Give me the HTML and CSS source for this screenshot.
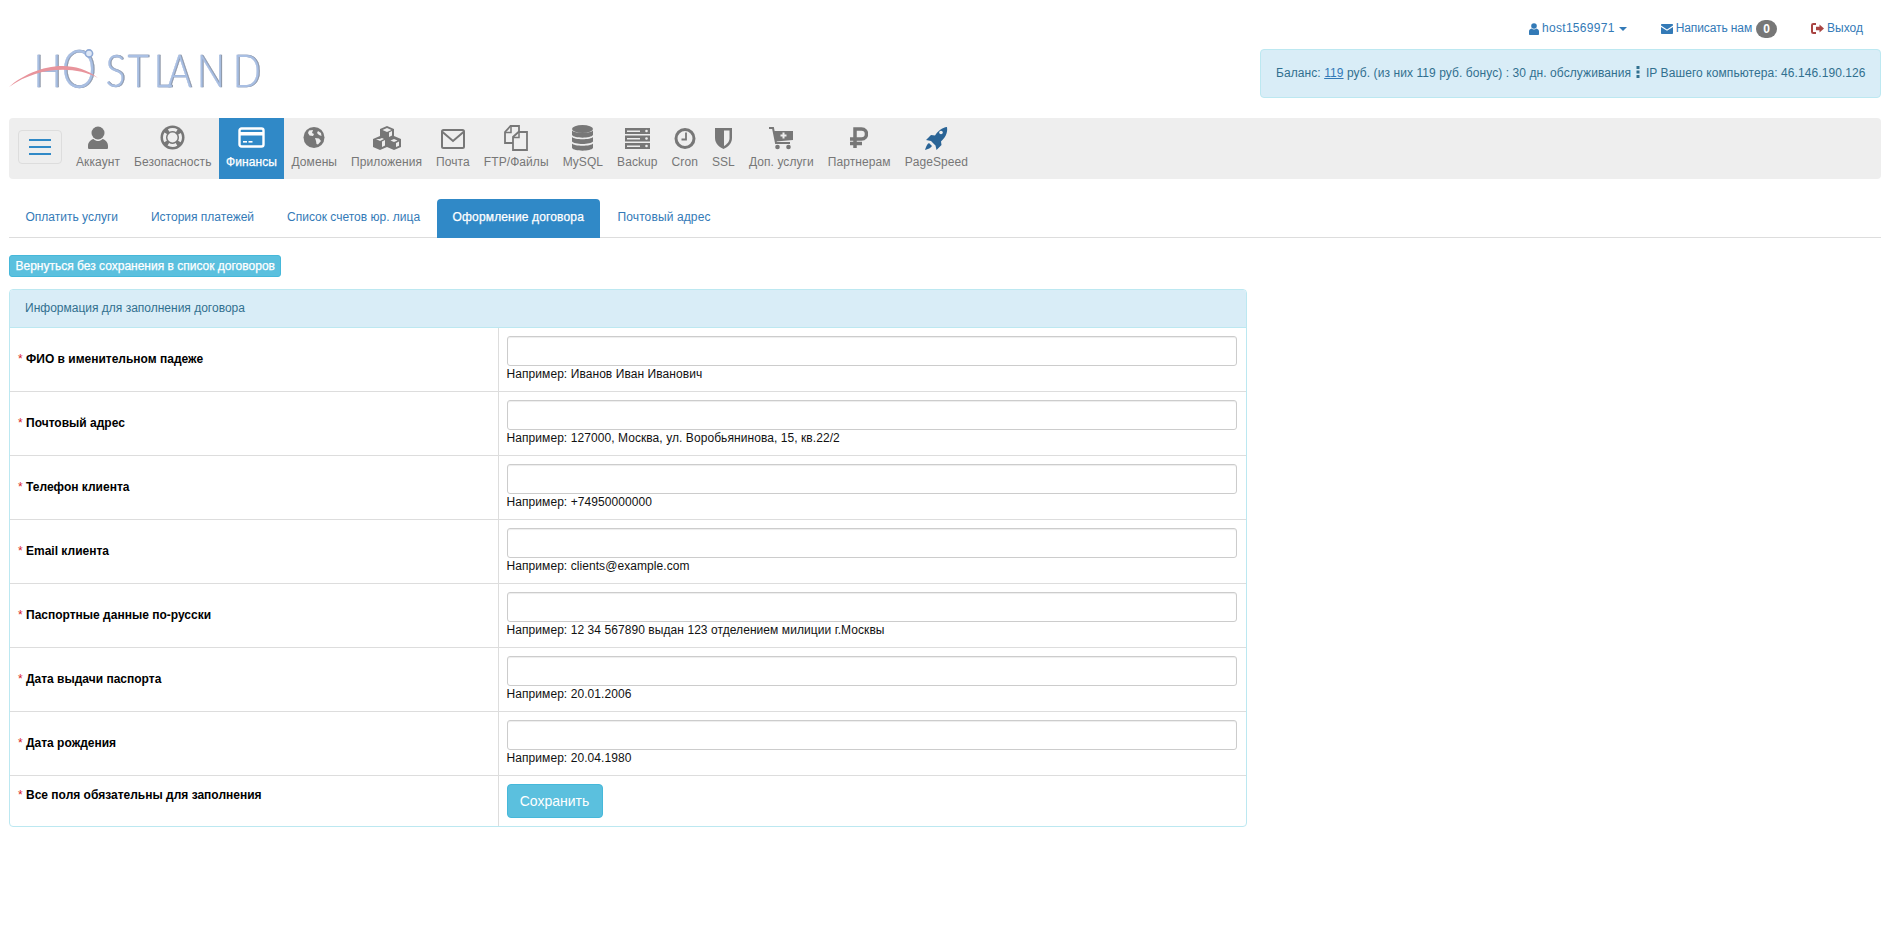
FILE: index.html
```html
<!DOCTYPE html>
<html lang="ru">
<head>
<meta charset="utf-8">
<title>Hostland</title>
<link rel="stylesheet" href="styles.css">
</head>
<body>
<div class="page">
  <div class="toplinks">
    <a class="toplink" href="#"><svg class="mini" width="10" height="12" viewBox="0 0 10 12"><circle cx="5" cy="3" r="2.8" fill="#337ab7"/><path d="M0 11V8.5C0 6.8 1.2 6 2.6 5.6 3.3 6.3 4.1 6.6 5 6.6S6.7 6.3 7.4 5.6C8.8 6 10 6.8 10 8.5V11C10 11.6 9.6 12 9 12H1C.4 12 0 11.6 0 11Z" fill="#337ab7"/></svg><span class="hostname">host1569971</span><span class="caret"></span></a>
    <a class="toplink" href="#"><svg class="mini" width="12" height="10" viewBox="0 0 12 10"><path d="M1 0H11C11.6 0 12 .4 12 1V1.6L6 5.4 0 1.6V1C0 .4.4 0 1 0ZM0 3 6 6.8 12 3V9C12 9.6 11.6 10 11 10H1C.4 10 0 9.6 0 9Z" fill="#337ab7"/></svg><span class="writeus">Написать нам</span><span class="badge">0</span></a>
    <a class="toplink" href="#"><svg class="mini" width="13" height="11" viewBox="0 0 13 11"><path d="M5 1H2.2C1.5 1 1 1.5 1 2.2V8.8C1 9.5 1.5 10 2.2 10H5" fill="none" stroke="#a94442" stroke-width="2"/><path d="M5 3.8H8.5V1.5L13 5.5 8.5 9.5V7.2H5Z" fill="#a94442"/></svg>Выход</a>
  </div>
  <header class="head">
    <a class="logo" href="#">
      <svg width="254" height="46" viewBox="0 0 254 46">
        <text class="logo-text" transform="scale(.8 1)" y="38"><tspan x="31">H</tspan><tspan class="logo-o" x="66" y="39">O</tspan><tspan x="121 148 181 198 235 280" y="38">STLAND</tspan></text>
        <path d="M0 38C20 20 60 6 89 29 65 16 28 18 0 38Z" fill="#e8949c"/>
        <circle cx="80" cy="4.5" r="3.6" fill="#dfe8f6" stroke="#8fa9d4" stroke-width="1.6"/>
      </svg>
    </a>
    <div class="balance">Баланс: <a href="#">119</a> руб. (из них 119 руб. бонус) : 30 дн. обслуживания <svg class="kebab" width="4" height="12" viewBox="0 0 4 12"><rect x="0.5" y="0" width="3" height="3" fill="#31708f"/><rect x="0.5" y="4.500" width="3" height="3" fill="#31708f"/><rect x="0.5" y="9" width="3" height="3" fill="#31708f"/></svg> IP Вашего компьютера: 46.146.190.126</div>
  </header>

  <nav class="mainnav">
    <button class="burger" type="button"><span></span><span></span><span></span></button>
    <a class="navitem" href="#"><svg width="20" height="28" viewBox="0 0 20 28"><circle cx="10" cy="9" r="6.500" fill="#777"/><path d="M0 22C0 18 3 15.500 5.500 15 7 16.500 8.500 17 10 17S13 16.500 14.500 15C17 15.500 20 18 20 22V23.500C20 24.500 19.500 25 18.500 25H1.500C.5 25 0 24.500 0 23.500Z" fill="#777"/></svg>Аккаунт</a>
    <a class="navitem" href="#"><svg width="25" height="28" viewBox="0 0 25 28"><circle cx="12.500" cy="13.500" r="12" fill="#777"/><circle cx="12.500" cy="13.500" r="5" fill="#eee"/><circle cx="12.500" cy="13.500" r="8" fill="none" stroke="#eee" stroke-width="3" stroke-dasharray="8.57 4" stroke-dashoffset="4.28"/></svg>Безопасность</a>
    <a class="navitem active" href="#"><svg width="27" height="28" viewBox="0 0 27 28"><rect x="1.500" y="4.500" width="24" height="18" rx="2" fill="none" stroke="#fff" stroke-width="2.400"/><rect x="2" y="8" width="23" height="3.500" fill="#fff"/><rect x="5" y="17" width="4" height="1.600" fill="#fff"/><rect x="10.500" y="17" width="4" height="1.600" fill="#fff"/></svg>Финансы</a>
    <a class="navitem" href="#"><svg width="22" height="28" viewBox="0 0 22 28"><circle cx="11" cy="13.500" r="10.500" fill="#777"/><path d="M6 6.500 10 6 9 9 11 10 10 12 6.500 11.500 5 9ZM12 14 16 14.500 18 17 15 20.500 13.500 20 13 17ZM15 7 18 9 18.500 12 16 11 14 9Z" fill="#eee"/></svg>Домены</a>
    <a class="navitem" href="#"><svg width="30" height="28" viewBox="0 0 30 28"><path d="M15 2 22 5V12L29 15V23L22 26 15 23 8 26 1 23V15L8 12V5Z" fill="#777"/><path d="M15 4 19.500 6 15 8 10.500 6ZM7.500 15 10 14 12 15 8 17 4 15ZM22 15 25.500 16.500 22 18 18.500 16.500ZM10 17.500 13 16V21.500L10 23ZM24 19 27 17.500V21.800L24 23ZM17 8.500 20 7V11.500L17 13Z" fill="#eee"/></svg>Приложения</a>
    <a class="navitem" href="#"><svg width="24" height="28" viewBox="0 0 24 28"><rect x="1" y="6" width="22" height="18" rx="1.500" fill="none" stroke="#777" stroke-width="2"/><path d="M1.500 8 12 17 22.500 8" fill="none" stroke="#777" stroke-width="2"/></svg>Почта</a>
    <a class="navitem" href="#"><svg width="24" height="28" viewBox="0 0 24 28"><path d="M11 19H1V8L6.500 2H15V8" fill="none" stroke="#777" stroke-width="1.800"/><path d="M1 8.500H7V2.500" fill="none" stroke="#777" stroke-width="1.500"/><path d="M9 26V13L14.500 8H23V26Z" fill="#eee" stroke="#777" stroke-width="1.800"/><path d="M9 13.500H15V8.500" fill="none" stroke="#777" stroke-width="1.500"/></svg>FTP/Файлы</a>
    <a class="navitem" href="#"><svg width="21" height="28" viewBox="0 0 21 28"><ellipse cx="10.500" cy="5" rx="10.500" ry="4" fill="#777"/><path d="M0 6.500C2 9.500 19 9.500 21 6.500V11C19 14.500 2 14.500 0 11ZM0 13C2 16 19 16 21 13V17.500C19 20.800 2 20.800 0 17.500ZM0 19.500C2 22.500 19 22.500 21 19.500V24C19 27.500 2 27.500 0 24Z" fill="#777"/></svg>MySQL</a>
    <a class="navitem" href="#"><svg width="25" height="28" viewBox="0 0 25 28"><path d="M0 4H25V10H0ZM0 11.500H25V17.500H0ZM0 19H25V25H0Z" fill="#777"/><path d="M2 6.500H15V8H2ZM2 14H15V15.500H2ZM2 21.500H15V23H2Z" fill="#eee"/><circle cx="21.500" cy="7" r="1.300" fill="#eee"/><circle cx="21.500" cy="14.500" r="1.300" fill="#eee"/><circle cx="21.500" cy="22" r="1.300" fill="#eee"/></svg>Backup</a>
    <a class="navitem" href="#"><svg width="22" height="28" viewBox="0 0 22 28"><circle cx="11" cy="14.500" r="9" fill="none" stroke="#777" stroke-width="3"/><path d="M12 8.500V15.500H7.500" fill="none" stroke="#777" stroke-width="1.800"/></svg>Cron</a>
    <a class="navitem" href="#"><svg width="17" height="28" viewBox="0 0 17 28"><path d="M0 4H17V14C17 20 12 23.500 8.500 25 5 23.500 0 20 0 14Z" fill="#777"/><path d="M9 6.500H14.500V14C14.500 18 11.500 20.500 9 22Z" fill="#eee"/></svg>SSL</a>
    <a class="navitem" href="#"><svg width="24" height="28" viewBox="0 0 24 28"><path d="M0 4H4L7 19H21" fill="none" stroke="#777" stroke-width="2"/><path d="M5 7H24V16L7 17.500Z" fill="#777"/><circle cx="8.500" cy="23" r="2.300" fill="#777"/><circle cx="19.500" cy="23" r="2.300" fill="#777"/><path d="M13.500 8.500H15.500V10.500H17.500V12.500H15.500V14.500H13.500V12.500H11.500V10.500H13.500Z" fill="#eee"/></svg>Доп. услуги</a>
    <a class="navitem" href="#"><svg width="18" height="28" viewBox="0 0 18 28"><path d="M5 24V5H11.500C15 5 16.500 7.500 16.500 10S15 15 11.500 15H0M0 19.500H12" fill="none" stroke="#777" stroke-width="3.500"/></svg>Партнерам</a>
    <a class="navitem" href="#"><svg width="24" height="28" viewBox="0 0 24 28"><path d="M23 3C24 9 21 14 17 17.500L17.500 21 12.500 26 11.500 21.500 7 17 2 16 7 11 11 11.500C14 7 18 3.500 23 3Z" fill="#2a6496"/><path d="M5 19C3 20 2 23 1 26 4 25 7 24 8 22Z" fill="#2a6496"/><circle cx="17" cy="8.500" r="1.800" fill="#eee"/></svg>PageSpeed</a>
  </nav>

  <ul class="tabs">
    <li><a href="#">Оплатить услуги</a></li>
    <li><a href="#">История платежей</a></li>
    <li><a href="#">Список счетов юр. лица</a></li>
    <li class="current"><a href="#">Оформление договора</a></li>
    <li class="tab-last"><a href="#">Почтовый адрес</a></li>
  </ul>

  <a class="backbtn" href="#">Вернуться без сохранения в список договоров</a>

  <section class="panel">
    <div class="panel-head">Информация для заполнения договора</div>
    <table class="form">
      <tr><td class="lab"><span class="req">*</span> <b>ФИО в именительном падеже</b></td><td class="val"><input class="field" type="text"><div class="hint">Например: Иванов Иван Иванович</div></td></tr>
      <tr><td class="lab"><span class="req">*</span> <b>Почтовый адрес</b></td><td class="val"><input class="field" type="text"><div class="hint">Например: 127000, Москва, ул. Воробьянинова, 15, кв.22/2</div></td></tr>
      <tr><td class="lab"><span class="req">*</span> <b>Телефон клиента</b></td><td class="val"><input class="field" type="text"><div class="hint">Например: +74950000000</div></td></tr>
      <tr><td class="lab"><span class="req">*</span> <b>Email клиента</b></td><td class="val"><input class="field" type="text"><div class="hint">Например: clients@example.com</div></td></tr>
      <tr><td class="lab"><span class="req">*</span> <b>Паспортные данные по-русски</b></td><td class="val"><input class="field" type="text"><div class="hint">Например: 12 34 567890 выдан 123 отделением милиции г.Москвы</div></td></tr>
      <tr><td class="lab"><span class="req">*</span> <b>Дата выдачи паспорта</b></td><td class="val"><input class="field" type="text"><div class="hint">Например: 20.01.2006</div></td></tr>
      <tr><td class="lab"><span class="req">*</span> <b>Дата рождения</b></td><td class="val"><input class="field" type="text"><div class="hint">Например: 20.04.1980</div></td></tr>
      <tr><td class="lab lab-top"><span class="req">*</span> <b>Все поля обязательны для заполнения</b></td><td class="val"><button class="save" type="button">Сохранить</button></td></tr>
    </table>
  </section>
</div>
</body>
</html>
```
FILE: styles.css
```css
* { box-sizing: border-box; }
html, body { margin: 0; padding: 0; background: #fff; }
body { font: 12px/17px "Liberation Sans", Arial, sans-serif; color: #333; }
a { color: #337ab7; text-decoration: none; }
.page { padding: 0 17px 0 9px; }

.toplinks { display: flex; justify-content: flex-end; align-items: center; gap: 34px; height: 49px; padding: 8px 18px 0 0; }
.toplink { display: flex; align-items: center; height: 20px; }
.mini { margin-right: 3px; flex: none; }
.hostname { letter-spacing: .3px; }
.writeus { letter-spacing: -.1px; }
.caret { width: 0; height: 0; margin-left: 4px; border-top: 4px solid #337ab7; border-left: 4px solid transparent; border-right: 4px solid transparent; }
.badge { margin-left: 4px; min-width: 21px; height: 18px; padding: 0 7px; border-radius: 9px; background: #777; color: #fff; font-weight: bold; line-height: 18px; text-align: center; }

.head { display: flex; justify-content: space-between; align-items: flex-start; margin-bottom: 20px; }
.logo { display: block; }
.logo svg { display: block; overflow: visible; }
.logo-text { font: 300 46px "Lato", "Liberation Sans", sans-serif; fill: #a9bfe3; stroke: #a9bfe3; stroke-width: .4px; filter: drop-shadow(1px 0 0 #6f7a8e); }
.logo-o { font-size: 54px; }
.balance { width: 621px; height: 49px; padding: 15px; background: #d9edf7; border: 1px solid #bce8f1; border-radius: 4px; color: #31708f; white-space: nowrap; letter-spacing: .08px; }
.balance a { text-decoration: underline; }
.kebab { margin: 0 3px 0 1px; vertical-align: -1px; }

.mainnav { display: flex; align-items: stretch; height: 61px; padding-left: 9px; background: #eee; border-radius: 4px; }
.burger { display: flex; flex-direction: column; justify-content: center; gap: 5px; width: 44px; height: 34px; margin: 12px 7px 0 0; padding: 0 10px; background: transparent; border: 1px solid #ddd; border-radius: 4px; }
.burger span { display: block; height: 2px; background: #3089c7; }
.navitem { display: flex; flex-direction: column; align-items: center; padding: 6px 7px 0; color: #777; white-space: nowrap; letter-spacing: .08px; }
.navitem svg { display: block; flex: none; margin-bottom: 2px; }
.navitem.active { padding: 6px 7.5px 0; background: #3089c7; color: #fff; -webkit-text-stroke: .25px #fff; }

.tabs { display: flex; margin: 20px 0 17px; padding: 0 0 0 1px; list-style: none; border-bottom: 1px solid #ddd; }
.tabs li { margin: 0 2px -1px 0; }
.tabs a { display: block; padding: 10px 15.5px; height: 39px; border-radius: 4px 4px 0 0; }
.tabs .current { margin-left: -1px; }
.tabs .current a { padding: 10px 16px; background: #3089c7; color: #fff; letter-spacing: .15px; -webkit-text-stroke: .25px #fff; }
.tabs .tab-last a { letter-spacing: .12px; }

.backbtn { display: inline-block; height: 22px; padding: 2px 5.5px; background: #5bc0de; border: 1px solid #46b8da; border-radius: 3px; color: #fff; line-height: 16px; vertical-align: top; -webkit-text-stroke: .25px #fff; }

.panel { width: 1238px; margin-top: 12px; background: #fff; border: 1px solid #bce8f1; border-radius: 4px; overflow: hidden; }
.panel-head { height: 38px; padding: 10px 15px; background: #d9edf7; border-bottom: 1px solid #bce8f1; color: #31708f; }
.form { width: 100%; border-collapse: collapse; table-layout: fixed; }
.form td { padding: 8px; border-top: 1px solid #ddd; }
.form tr:first-child td { border-top: 0; }
.lab { width: 488px; border-right: 1px solid #ddd; vertical-align: middle; color: #000; }
.lab-top { vertical-align: top; padding-top: 11px !important; }
.req { color: #d9231f; }
.val { vertical-align: top; }
.field { display: block; width: calc(100% - 1px); height: 30px; padding: 5px 10px; background: #fff; border: 1px solid #ccc; border-radius: 3px; box-shadow: inset 0 1px 1px rgba(0,0,0,.075); }
.hint { color: #111; height: 17px; letter-spacing: .07px; }
.save { display: block; width: 96px; height: 34px; padding: 6px 12px; background: #5bc0de; border: 1px solid #46b8da; border-radius: 4px; color: #fff; font: 14px/20px "Liberation Sans", Arial, sans-serif; }
```
